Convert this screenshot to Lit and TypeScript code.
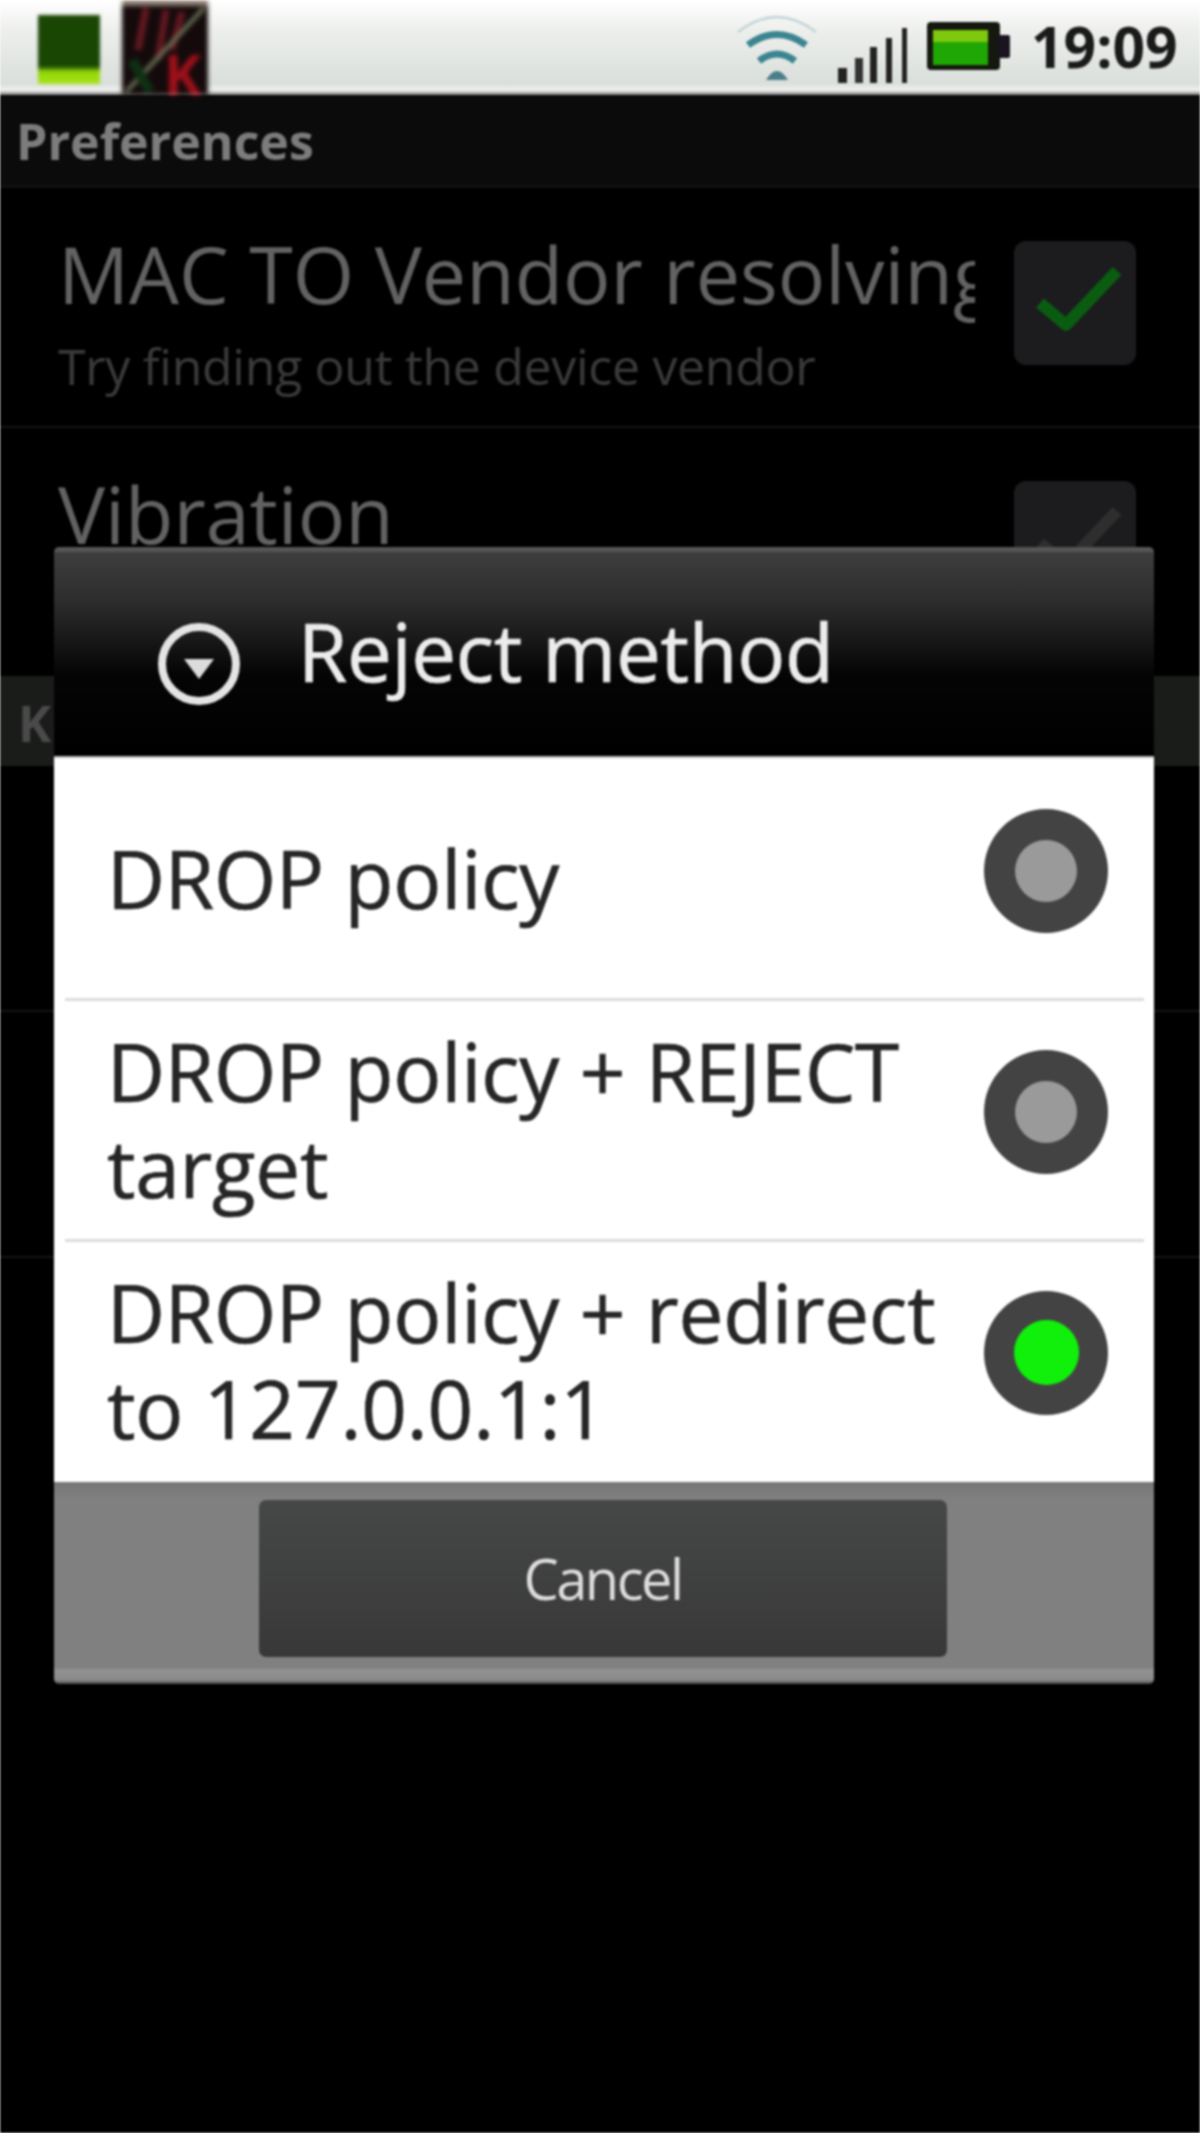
import { LitElement, html, css, svg } from "lit";
import { customElement } from "lit/decorators.js";

const options = [
  { label: "DROP policy", on: false },
  { label: "DROP policy + REJECT target", on: false },
  { label: "DROP policy + redirect to 127.0.0.1:1", on: true },
];

const check = (color: string) => svg`<svg class="tick" viewBox="0 0 122 124" width="122" height="124">
  <path d="M26 62 L52 84 L103 30" fill="none" stroke=${color} stroke-width="12" stroke-linejoin="round"/></svg>`;

@customElement("app-root")
export class AppRoot extends LitElement {
  static styles = css`
    :host { display: block; width: 1200px; height: 2133px; background: #000; position: relative; overflow: hidden; font-family: "Open Sans", "Noto Sans", sans-serif; filter: blur(1.2px); }
    .status { height: 95px; display: flex; align-items: stretch; box-sizing: border-box; background: linear-gradient(#ffffff 0, #eceeeb 35%, #dadfdc 88%, #f0f1ef 95%, #777 100%); }
    .notif { display: flex; padding-left: 38px; gap: 22px; flex: 1; align-items: flex-start; }
    .cpu { width: 62px; height: 69px; margin-top: 15px; background: linear-gradient(#1a4604 0, #1a4604 74%, #8fd40a 82%, #a8e414 100%); filter: blur(1.5px); }
    .thumb { display: block; filter: blur(2px); }
    .sys { display: flex; align-items: flex-start; padding-right: 23px; }
    .sys svg { display: block; }
    .time { font: bold 57px/1 "Open Sans", sans-serif; color: #1a1a1a; margin: 18px 0 0 19px; width: 146px; white-space: nowrap; }
    .appbar { height: 93px; background: #0b0b0b; box-sizing: border-box; padding: 16px 0 0 16px; border-bottom: 3px solid #111; }
    .appbar span { font: bold 50px/60px "Open Sans", sans-serif; color: #7c7c7c; }
    .pref { display: flex; padding: 0 64px 0 58px; box-sizing: border-box; border-bottom: 2px solid #151515; }
    .pref.a { height: 240px; }
    .pref.b { height: 248px; border: 0; }
    .pref.c { height: 246px; }
    .texts { flex: 1; min-width: 0; overflow: hidden; white-space: nowrap; width: 917px; }
    .t { font-size: 79px; line-height: 96px; color: #626262; margin-top: 38px; }
    .s { font-size: 50px; line-height: 60px; color: #3a3a3a; margin-top: 14px; letter-spacing: -0.3px; }
    .box { width: 122px; height: 124px; border-radius: 12px; background: #1c1c1e; margin-top: 53px; flex: none; margin-left: 39px; }
    .tick { display: block; }
    .cat { height: 90px; background: #1a1c1a; font: bold 50px/94px "Open Sans", sans-serif; color: #4a4a4a; padding-left: 18px; }
    .dialog { position: absolute; left: 54px; top: 547px; width: 1100px; border-radius: 5px; overflow: hidden; }
    .head { height: 211px; box-sizing: border-box; border-top: 5px solid #555; display: flex; align-items: center; padding: 0 0 12px 103px; gap: 57px; background: linear-gradient(#3e3e3e 0, #2c2c2c 25%, #050505 60%, #000 100%); border-bottom: 2px solid #bbb; }
    .head svg { display: block; flex: none; margin-top: 32px; }
    .head span { font-size: 80px; line-height: 90px; color: #ececec; letter-spacing: -0.4px; margin-top: 5px; -webkit-text-stroke: 0.7px #ececec; }
    .list { background: #fff; padding-bottom: 1px; }
    .row { height: 241px; display: flex; align-items: center; padding: 0 46px 0 53px; position: relative; box-sizing: border-box; }
    .row + .row::before { content: ""; position: absolute; left: 11px; right: 10px; top: -1px; height: 3px; background: #dcdcdc; }
    .label { flex: 1; font-size: 80px; line-height: 96px; color: #262626; letter-spacing: -0.2px; -webkit-text-stroke: 0.7px #262626; margin-top: -2px; }
    .radio { flex: none; width: 124px; height: 124px; border-radius: 50%; background: #434343; display: flex; align-items: center; justify-content: center; margin: 0 0 16px 20px; }
    .dot { width: 62px; height: 62px; border-radius: 50%; background: #9a9a9a; }
    .dot.on { width: 65px; height: 65px; background: #10f00a; }
    .foot { height: 202px; box-sizing: border-box; background: linear-gradient(#747674 0, #808080 8%, #808080 92%, #929292 93%, #8a8a8a 98%, #444 100%); display: flex; justify-content: center; padding: 18px 3px 0 0; }
    .btn { width: 688px; height: 157px; border-radius: 7px; background: linear-gradient(#464847, #383838); color: #dcdcdc; font-size: 56px; line-height: 157px; text-align: center; letter-spacing: -2.5px; }
  `;

  render() {
    return html`
      <div class="status">
        <div class="notif">
          <div class="cpu"></div>
          <svg class="thumb" width="86" height="95" viewBox="0 0 86 95">
            <rect width="86" height="95" fill="#140a0b"/>
            <rect width="86" height="6" fill="#8b7a70"/>
            <path d="M24 8 L16 50 M44 10 L36 60 M60 12 L50 50" stroke="#641820" stroke-width="7" fill="none"/>
            <path d="M4 92 L82 8" stroke="#6d7a5c" stroke-width="4" fill="none"/>
            <path d="M10 60 L28 92" stroke="#0f3014" stroke-width="10" fill="none"/>
            <text x="42" y="95" font-family="Open Sans, sans-serif" font-weight="700" font-size="56" fill="#a0101a">K</text>
          </svg>
        </div>
        <div class="sys">
          <svg width="285" height="95" viewBox="727 0 285 95">
            <path d="M738 32 Q777 2 816 32" fill="none" stroke="#c8d8da" stroke-width="3"/>
            <path d="M748 45 Q777 24 806 45" fill="none" stroke="#3b8590" stroke-width="7"/>
            <path d="M759 61 Q777 47 795 61" fill="none" stroke="#3b8590" stroke-width="7"/>
            <path d="M766 80 Q777 62 788 80 Z" fill="#4b7f89"/>
            <rect x="838" y="68" width="9" height="15" fill="#222"/>
            <rect x="855" y="58" width="8" height="25" fill="#333"/>
            <rect x="870" y="47" width="7" height="36" fill="#222"/>
            <rect x="886" y="38" width="6" height="45" fill="#222"/>
            <rect x="902" y="28" width="5" height="55" fill="#222"/>
            <rect x="927" y="22" width="73" height="48" rx="4" fill="#14180f"/>
            <rect x="998" y="35" width="12" height="23" rx="2" fill="#1a1420"/>
            <rect x="933" y="30" width="55" height="35" fill="#1fa805"/>
            <rect x="933" y="30" width="55" height="12" fill="#7ec80e"/>
          </svg>
          <div class="time">19:09</div>
        </div>
      </div>
      <div class="appbar"><span>Preferences</span></div>
      <div class="pref a">
        <div class="texts">
          <div class="t">MAC TO Vendor resolving</div>
          <div class="s">Try finding out the device vendor</div>
        </div>
        <div class="box">${check("#0a5c10")}</div>
      </div>
      <div class="pref b">
        <div class="texts"><div class="t">Vibration</div></div>
        <div class="box">${check("#2e2e2e")}</div>
      </div>
      <div class="cat">K</div>
      <div class="pref c"></div>
      <div class="pref c"></div>

      <div class="dialog">
        <div class="head">
          <svg width="84" height="84" viewBox="0 0 84 84">
            <circle cx="42" cy="42" r="37" fill="none" stroke="#e4e4e4" stroke-width="8"/>
            <path d="M27 37 H57 L42 57 Z" fill="#dcdcdc"/>
          </svg>
          <span>Reject method</span>
        </div>
        <div class="list">
          ${options.map(
            (o) => html`<div class="row">
              <div class="label">${o.label}</div>
              <div class="radio"><div class="dot ${o.on ? "on" : ""}"></div></div>
            </div>`
          )}
        </div>
        <div class="foot"><div class="btn">Cancel</div></div>
      </div>
    `;
  }
}
